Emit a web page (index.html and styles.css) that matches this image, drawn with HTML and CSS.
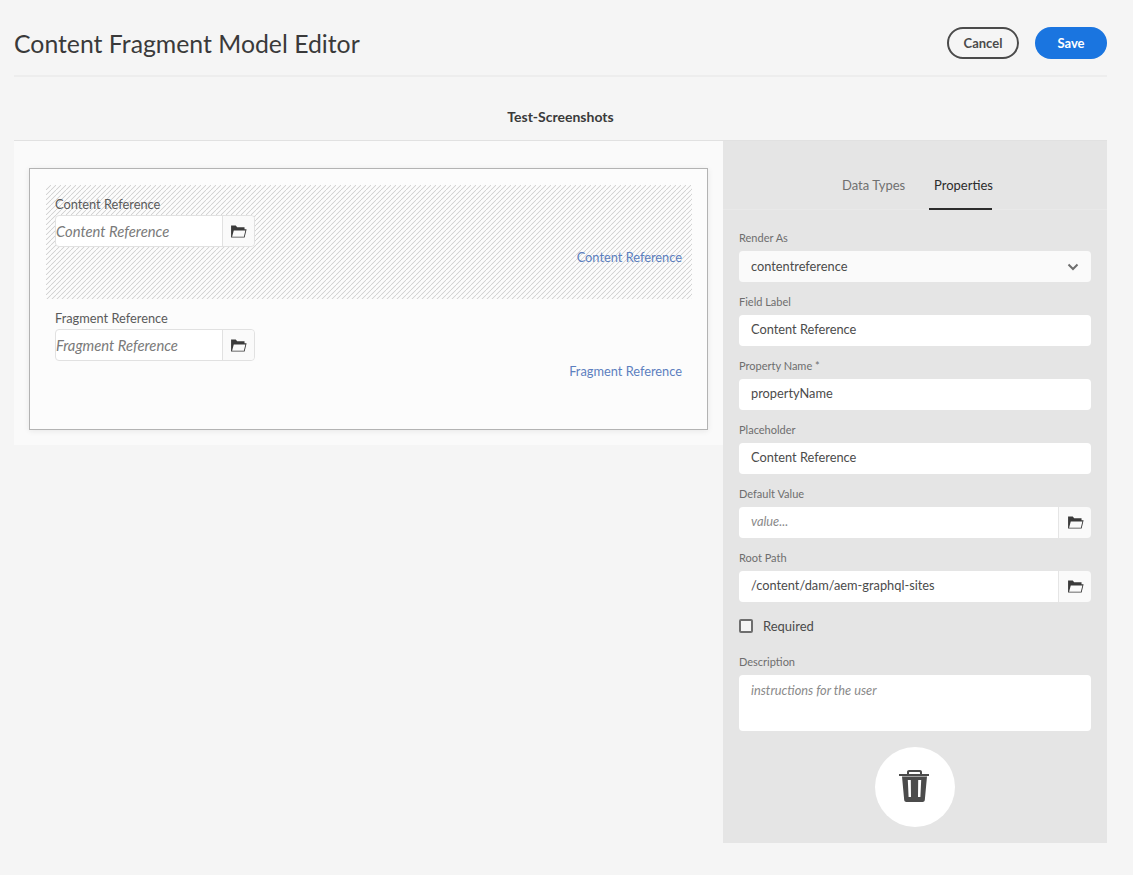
FILE: index.html
```html
<!DOCTYPE html>
<html lang="en">
<head>
  <meta charset="UTF-8" />
  <title>Content Fragment Model Editor</title>
  <link rel="stylesheet" href="styles.css">
</head>
<body>
  <svg class="icon-defs" width="0" height="0">
    <symbol id="folder" viewBox="0 0 18 14">
      <path fill-rule="evenodd" d="M1 0.500h5l1.600 1.800H15.500v2.200h2.200L15.600 13.500H1zM2.100 12.600h12.700l1.600-6.800H3.900z"/>
    </symbol>
  </svg>

  <div id="page">
    <header class="topbar">
      <h1>Content Fragment Model Editor</h1>
      <div class="actions">
        <button class="btn btn-cancel">Cancel</button>
        <button class="btn btn-save">Save</button>
      </div>
    </header>

    <div class="model-name">Test-Screenshots</div>

    <div class="editor">
      <section class="canvas">
        <div class="model-box">
          <div class="model-row selected">
            <label class="row-label">Content Reference</label>
            <div class="picker">
              <span class="picker-text">Content Reference</span>
              <span class="picker-btn"><svg class="folder"><use href="#folder"/></svg></span>
            </div>
            <div class="row-type">Content Reference</div>
          </div>
          <div class="model-row">
            <label class="row-label">Fragment Reference</label>
            <div class="picker">
              <span class="picker-text">Fragment Reference</span>
              <span class="picker-btn"><svg class="folder"><use href="#folder"/></svg></span>
            </div>
            <div class="row-type">Fragment Reference</div>
          </div>
        </div>
      </section>

      <aside class="sidebar">
        <nav class="tabs">
          <span class="tab">Data Types</span>
          <span class="tab active">Properties</span>
        </nav>

        <form class="props">
          <label>Render As</label>
          <div class="field select">
            <span>contentreference</span>
            <svg class="chevron" viewBox="0 0 12 8"><path d="M1.500 1.500 6 6l4.500-4.500" fill="none" stroke="#6e6e6e" stroke-width="2"/></svg>
          </div>

          <label>Field Label</label>
          <div class="field">Content Reference</div>

          <label>Property Name *</label>
          <div class="field">propertyName</div>

          <label>Placeholder</label>
          <div class="field">Content Reference</div>

          <label>Default Value</label>
          <div class="field-group">
            <div class="field placeholder">value...</div>
            <span class="group-btn"><svg class="folder"><use href="#folder"/></svg></span>
          </div>

          <label>Root Path</label>
          <div class="field-group">
            <div class="field">/content/dam/aem-graphql-sites</div>
            <span class="group-btn"><svg class="folder"><use href="#folder"/></svg></span>
          </div>

          <div class="check-row">
            <span class="checkbox"></span>
            <span>Required</span>
          </div>

          <label>Description</label>
          <div class="field textarea placeholder">instructions for the user</div>
        </form>

        <div class="delete-wrap">
          <button class="delete" type="button" aria-label="Delete">
            <svg class="trash" width="30" height="32" viewBox="0 0 30 32" fill="#4b4b4b">
              <path fill-rule="evenodd" d="M8 4V2C8 .9 8.900 0 10 0h11c1.100 0 2 .9 2 2v2h7v2H0V4zM10 4h11V2.500c0-.3-.2-.5-.5-.5h-10c-.3 0-.5.200-.5.500z"/>
              <path fill-rule="evenodd" d="M3 6.500h25L25.800 30c-.1 1.200-1 2-2.200 2H7.400c-1.200 0-2.100-.8-2.200-2zM8.800 10l.8 17h2.400l-.2-17zM19.200 10l-.2 17h2.400l.8-17z"/>
            </svg>
          </button>
        </div>
      </aside>
    </div>
  </div>
</body>
</html>
```

FILE: styles.css
```css
* {
  box-sizing: border-box;
}

html, body {
  margin: 0;
  background: #f5f5f5;
  font-family: Lato, 'Liberation Sans', sans-serif;
  color: #4b4b4b;
}

.icon-defs {
  display: block;
  height: 0;
}

#page {
  padding: 0 26px 0 14px;
}

.topbar {
  display: flex;
  justify-content: space-between;
  align-items: center;
  height: 77px;
  padding-top: 11px;
  border-bottom: 2px solid #ededed;
}

h1 {
  margin: 0;
  font-size: 24.8px;
  font-weight: 400;
  color: #3a3a3a;
}

.actions {
  display: flex;
  gap: 16px;
}

.btn {
  width: 72px;
  height: 32px;
  border-radius: 16px;
  font-family: inherit;
  font-size: 13px;
  font-weight: 700;
}

.btn-cancel {
  background: transparent;
  border: 2px solid #4b4b4b;
  color: #4b4b4b;
}

.btn-save {
  background: #1a75e0;
  border: none;
  color: #fff;
}

.model-name {
  height: 64px;
  padding-top: 30px;
  border-bottom: 1px solid #e1e1e1;
  text-align: center;
  font-size: 14px;
  font-weight: 700;
  line-height: 20px;
  color: #3a3a3a;
}

.editor {
  display: flex;
  align-items: flex-start;
}

.canvas {
  flex: 1;
  height: 304px;
  padding: 27px 15px 15px;
  background: #fafafa;
}

.model-box {
  height: 262px;
  padding: 16px 15px 16px 16px;
  border: 1px solid #b3b3b3;
  background: #fcfcfc;
  box-shadow: 0 1px 6px rgba(0, 0, 0, 0.08);
}

.model-row {
  height: 114px;
  padding: 10px 10px 0 9px;
}

.selected {
  background: linear-gradient(135deg, transparent 38%, #d4d4d4 50%, transparent 62%) 0 0 / 5px 5px;
}

.row-label {
  display: block;
  margin-bottom: 1px;
  font-size: 12.8px;
  line-height: 19px;
  color: #5a5a5a;
}

.picker {
  display: flex;
  width: 200px;
  height: 32px;
  border: 1px solid #e1e1e1;
  border-radius: 4px;
  background: #fff;
}

.picker-text {
  flex: 1;
  font-size: 14.8px;
  font-style: italic;
  line-height: 30px;
  color: #7a7a7a;
}

.picker-btn {
  display: flex;
  align-items: center;
  justify-content: center;
  width: 32px;
  border-left: 1px solid #e1e1e1;
  border-radius: 0 4px 4px 0;
  background: #fafafa;
}

.folder {
  width: 17px;
  height: 13px;
  fill: #3a3a3a;
}

.row-type {
  margin-top: 1px;
  font-size: 12.8px;
  line-height: 19px;
  text-align: right;
  color: #5c7fbf;
}

.sidebar {
  width: 384px;
  height: 702px;
  background: #e5e5e5;
}

.tabs {
  display: flex;
  gap: 24px;
  justify-content: center;
  height: 69px;
  padding-left: 4px;
  border-bottom: 1px solid #e9e9e9;
}

.tab {
  width: 63px;
  padding-top: 34px;
  font-size: 13px;
  line-height: 20px;
  text-align: center;
  white-space: nowrap;
  color: #707070;
}

.tab.active {
  height: 69px;
  padding-left: 5px;
  border-bottom: 2px solid #2c2c2c;
  color: #2c2c2c;
}

.props {
  padding: 18px 16px 0;
}

.props label {
  display: block;
  margin-bottom: 3px;
  font-size: 11px;
  line-height: 20px;
  color: #6e6e6e;
}

.field {
  height: 31px;
  margin-bottom: 10px;
  padding: 0 12px;
  border-radius: 4px;
  background: #fff;
  font-size: 12.8px;
  line-height: 29px;
  color: #4b4b4b;
}

.select {
  display: flex;
  align-items: center;
  justify-content: space-between;
  background: #fafafa;
}

.chevron {
  width: 12px;
  height: 8px;
}

.field-group {
  display: flex;
  gap: 1px;
  margin-bottom: 10px;
}

.field-group .field {
  flex: 1;
  margin-bottom: 0;
  border-radius: 4px 0 0 4px;
}

.group-btn {
  display: flex;
  align-items: center;
  justify-content: center;
  width: 32px;
  border-radius: 0 4px 4px 0;
  background: #fafafa;
}

.placeholder {
  font-style: italic;
  color: #8a8a8a;
}

.check-row {
  display: flex;
  align-items: center;
  gap: 10px;
  height: 24px;
  margin-top: 12px;
  margin-bottom: 14px;
  font-size: 13px;
  color: #4b4b4b;
}

.checkbox {
  width: 14px;
  height: 14px;
  border: 2px solid #6e6e6e;
  border-radius: 2px;
  background: #f5f5f5;
}

.textarea {
  height: 56px;
  margin-bottom: 0;
  line-height: 31px;
}

.delete-wrap {
  display: flex;
  justify-content: center;
  margin-top: 16px;
}

.delete {
  display: flex;
  align-items: center;
  justify-content: center;
  width: 80px;
  height: 80px;
  padding: 0;
  border: none;
  border-radius: 50%;
  background: #fff;
}

.trash {
  margin: 0 2px 2px 0;
}
```
